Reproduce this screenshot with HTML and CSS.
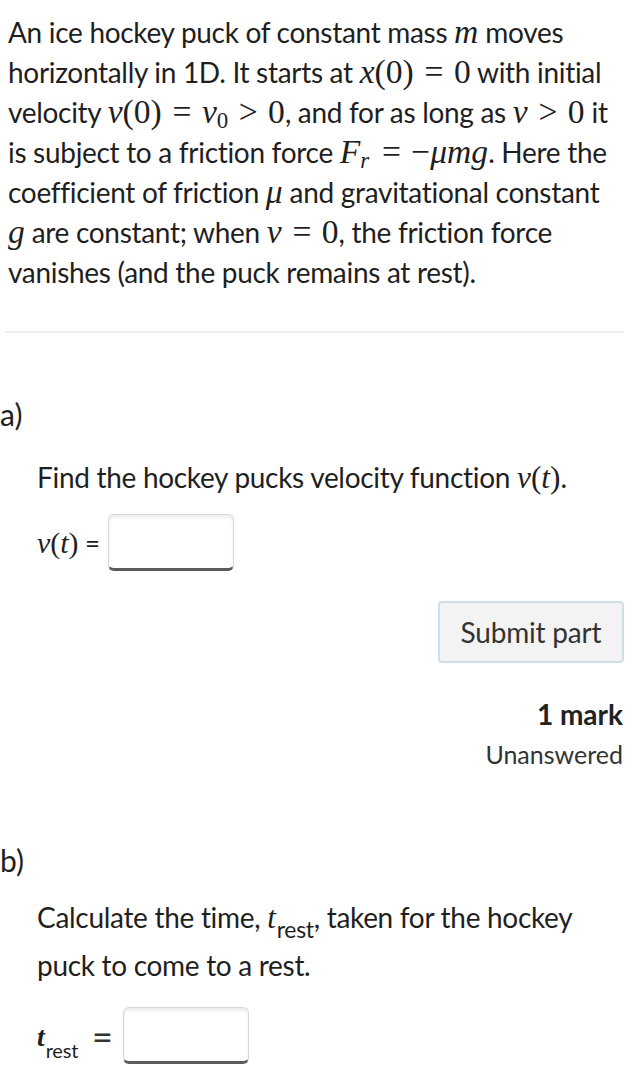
FILE: index.html
```html
<!DOCTYPE html>
<html>
<head>
<meta charset="utf-8">
<link rel="stylesheet" href="styles.css">
</head>
<body>
<div class="page">
  <div class="statement">
    <p>An ice hockey puck of constant mass <span class="m">m</span> moves<br>horizontally in 1D. It starts at <span class="m">x</span><span class="mr">(0)</span><span class="rel">=</span><span class="mr">0</span> with initial<br>velocity <span class="m">v</span><span class="mr">(0)</span><span class="rel">=</span><span class="m">v</span><sub class="ms">0</sub><span class="rel">&gt;</span><span class="mr">0</span>, and for as long as <span class="m">v</span><span class="rel">&gt;</span><span class="mr">0</span> it<br>is subject to a friction force <span class="m">F</span><sub class="msi">r</sub><span class="rel">=</span><span class="mr">−</span><span class="m">μmg</span>. Here the<br>coefficient of friction <span class="m">μ</span> and gravitational constant<br><span class="m">g</span> are constant; when <span class="m">v</span><span class="rel">=</span><span class="mr">0</span>, the friction force<br>vanishes (and the puck remains at rest).</p>
  </div>
  <hr class="divider">

  <section class="part">
    <div class="part-label">a)</div>
    <div class="part-body">
      <p class="prompt">Find the hockey pucks velocity function <span class="m">v</span><span class="mr">(</span><span class="m">t</span><span class="mr">)</span>.</p>
      <div class="answer-row">
        <span class="lhs"><span class="m">v</span><span class="mr">(</span><span class="m">t</span><span class="mr">)</span> =</span>
        <span class="answer-box"></span>
      </div>
      <div class="actions">
        <button class="submit">Submit part</button>
      </div>
      <div class="marks">
        <div class="mark-count">1 mark</div>
        <div class="mark-status">Unanswered</div>
      </div>
    </div>
  </section>

  <section class="part part-b">
    <div class="part-label">b)</div>
    <div class="part-body">
      <p class="prompt prompt-b">Calculate the time, <span class="m tsym">t</span><sub class="rest">rest</sub>, taken for the hockey<br>puck to come to a rest.</p>
      <div class="answer-row answer-row-b">
        <span class="lhs-b"><span class="m tsym-b">t</span><sub class="rest-b">rest</sub></span>
        <span class="eq-b">=</span>
        <span class="answer-box"></span>
      </div>
    </div>
  </section>
</div>
</body>
</html>
```

FILE: styles.css
```css
html, body {
  margin: 0;
  padding: 0;
  background: #ffffff;
}

body {
  font-family: "Lato", "Open Sans", sans-serif;
  color: #1f1f1f;
}

.page {
  padding-right: 13px;
}

.statement {
  padding: 12px 0 0 8px;
}

.statement p {
  margin: 0;
  font-size: 28px;
  line-height: 40px;
  letter-spacing: -0.3px;
  white-space: nowrap;
}

.m {
  font-family: "Liberation Serif", "DejaVu Serif", serif;
  font-style: italic;
  font-size: 1.2em;
  letter-spacing: 0;
  line-height: 0;
}

.mr {
  font-family: "Liberation Serif", "DejaVu Serif", serif;
  font-size: 1.2em;
  letter-spacing: 0;
  line-height: 0;
}

.rel {
  font-family: "Liberation Serif", "DejaVu Serif", serif;
  font-size: 1.2em;
  margin: 0 0.32em;
  line-height: 0;
}

.ms {
  font-family: "Liberation Serif", serif;
  font-size: 0.82em;
  vertical-align: -0.22em;
  line-height: 0;
}

.msi {
  font-family: "Liberation Serif", serif;
  font-style: italic;
  font-size: 0.82em;
  vertical-align: -0.22em;
  line-height: 0;
  margin-right: 0.1em;
}

.divider {
  border: 0;
  border-top: 2px solid #ededed;
  margin: 39px 0 0 5px;
}

.part {
  padding-top: 61px;
}

.part-label {
  font-size: 30px;
  line-height: 40px;
}

.part-body {
  padding-left: 37px;
}

.prompt {
  margin: 23px 0 0 0;
  font-size: 28px;
  line-height: 40px;
  letter-spacing: -0.3px;
}

.prompt .m, .prompt .mr {
  font-size: 1.12em;
}

.answer-row {
  display: flex;
  align-items: center;
  gap: 8px;
  margin-top: 17px;
}

.lhs {
  font-size: 26px;
  letter-spacing: -0.3px;
  line-height: 40px;
}

.lhs .m, .lhs .mr {
  font-size: 1.15em;
  line-height: 1;
}

.answer-box {
  display: inline-block;
  width: 124px;
  height: 53px;
  border: 1px solid #d6d6d6;
  border-bottom: 3px solid #5b5b5b;
  border-radius: 6px;
  box-shadow: inset 0 3px 3px rgba(0, 0, 0, 0.07);
}

.actions {
  display: flex;
  justify-content: flex-end;
  margin-top: 30px;
}

.submit {
  font-family: inherit;
  font-size: 28px;
  letter-spacing: -0.2px;
  color: #333333;
  background: #f3f3f4;
  border: 2px solid #cddfe8;
  border-radius: 4px;
  width: 186px;
  height: 62px;
  padding: 0;
}

.marks {
  text-align: right;
  margin-top: 31px;
  padding-right: 1px;
}

.mark-count {
  font-size: 28px;
  font-weight: 700;
  line-height: 40px;
  color: #222222;
}

.mark-status {
  font-size: 25px;
  color: #333333;
  line-height: 40px;
}

.part-b {
  padding-top: 66px;
}

.prompt-b {
  margin-top: 13px;
  line-height: 48px;
}

.prompt-b .tsym {
  font-size: 1.1em;
}

.rest {
  font-size: 0.82em;
  vertical-align: -0.42em;
  line-height: 0;
  margin-left: 1px;
}

.answer-row-b {
  margin-top: 18px;
  gap: 0;
}

.lhs-b {
  font-size: 25px;
  margin-right: 14px;
  line-height: 56px;
  padding-left: 0;
}

.lhs-b .tsym-b {
  font-weight: 700;
  font-size: 1.1em;
  line-height: 1;
}

.rest-b {
  font-size: 20px;
  letter-spacing: -0.2px;
  vertical-align: -0.6em;
  line-height: 0;
  margin-left: 1px;
}

.eq-b {
  font-size: 36px;
  line-height: 40px;
  margin-right: 10px;
  color: #333333;
}
```
